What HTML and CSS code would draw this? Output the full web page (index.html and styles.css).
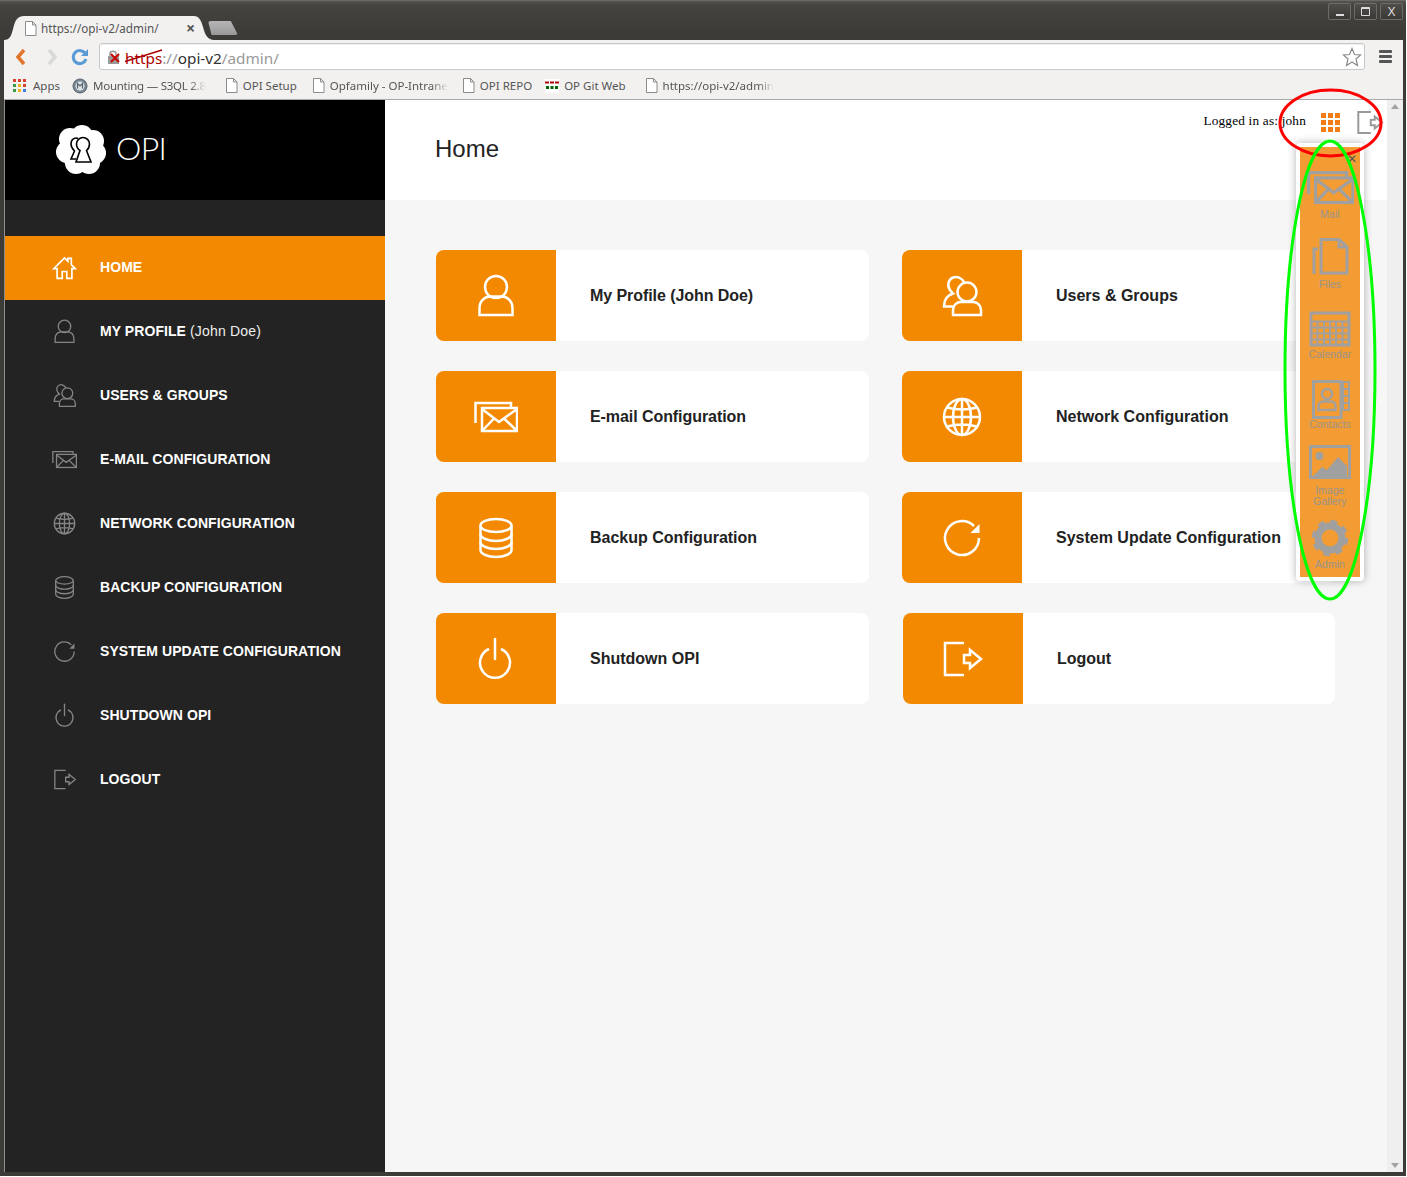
FILE: index.html
```html
<!DOCTYPE html>
<html>
<head>
    <title>OPI - Home</title>
    <link rel="stylesheet" href="styles.css">
</head>
<body>
    <!-- shared icons -->
    <svg class="defs" width="0" height="0">
        <symbol id="i-home" viewBox="0 0 44 44">
            <path d="M9 24V41H18V29H26V41H35V24H41L34 17V6H28V11L22 5L3 24Z"/>
        </symbol>
        <symbol id="i-user" viewBox="0 0 44 44">
            <circle cx="22" cy="13" r="11"/>
            <path d="M5.500 41V34C5.500 27 11 22.500 16 22.500H28C33 22.500 38.500 27 38.500 34V41Z"/>
        </symbol>
        <symbol id="i-users" viewBox="0 0 44 44">
            <circle cx="27" cy="18" r="9.500"/>
            <path d="M13 41V36C13 31 17 28 21 28H33C37 28 41 31 41 36V41Z"/>
            <path d="M24.500 9C22 3.500 16.500 2 13 3.500C8 5.500 7 12 10 16C11 17.500 12 18.500 13 19.500C8 21 4 25 4 32.500H13"/>
        </symbol>
        <symbol id="i-mail" viewBox="0 0 44 44">
            <path d="M1.500 28V8H37V12"/>
            <rect x="8" y="13" width="35" height="23"/>
            <path d="M8 14L25 27L43 14M8 36L20 23.500M43 36L30 23.500"/>
        </symbol>
        <symbol id="i-globe" viewBox="0 0 44 44">
            <circle cx="22" cy="22" r="18"/>
            <ellipse cx="22" cy="22" rx="9" ry="18"/>
            <path d="M22 4V40M4 22H40M7 12.500C16 15 28 15 37 12.500M7 31.500C16 29 28 29 37 31.500"/>
        </symbol>
        <symbol id="i-database" viewBox="0 0 44 44">
            <ellipse cx="22" cy="9.500" rx="15.500" ry="6.500"/>
            <path d="M6.500 9.500V34C6.500 38 14 41 22 41C30 41 37.500 38 37.500 34V9.500"/>
            <path d="M6.500 18C6.500 22 14 25 22 25C30 25 37.500 22 37.500 18M6.500 26C6.500 30 14 33 22 33C30 33 37.500 30 37.500 26"/>
        </symbol>
        <symbol id="i-refresh" viewBox="0 0 44 44">
            <path d="M39 22A17 17 0 1 1 34 10"/>
            <path d="M39.500 8V17H30.500Z" fill="currentColor" stroke="none"/>
        </symbol>
        <symbol id="i-power" viewBox="0 0 44 44">
            <path d="M16 12A15 15 0 1 0 28 12"/>
            <path d="M22 2V22" stroke-linecap="round"/>
        </symbol>
        <symbol id="i-logout" viewBox="0 0 44 44">
            <path d="M24 6H5V38H24"/>
            <path d="M24 18H30V13L41 22L30 31V26H24Z"/>
        </symbol>
        <symbol id="i-files" viewBox="0 0 44 44">
            <path d="M13 3.500H31L39 11V37H13Z"/>
            <path d="M31 3.500V11H39"/>
            <path d="M6 38V13H10"/>
        </symbol>
        <symbol id="i-calendar" viewBox="0 0 44 44">
            <rect x="3" y="7" width="38" height="32"/>
            <path d="M3 15.500H41M3 21.500H41M3 27.500H41M3 33.500H41M9.500 15V39M16 15V39M22 15V39M28 15V39M34.500 15V39" stroke-width="2"/>
        </symbol>
        <symbol id="i-contacts" viewBox="0 0 44 44">
            <rect x="5.500" y="5.500" width="27.500" height="36"/>
            <rect x="35" y="6" width="6" height="28" stroke-width="2"/>
            <path d="M35 13H41M35 20H41M35 27H41" stroke-width="2"/>
            <circle cx="19" cy="18" r="5" stroke-width="2.500"/>
            <path d="M10.500 34V30.500C10.500 27 13 25.500 15 25.500H23C25 25.500 27.500 27 27.500 30.500V34Z" stroke-width="2.500"/>
        </symbol>
        <symbol id="i-image" viewBox="0 0 44 44">
            <rect x="2.500" y="4.500" width="39" height="31"/>
            <circle cx="11.500" cy="14" r="4" fill="currentColor" stroke="none"/>
            <path d="M5 34L14 25L19 28L30 15L39 24V34Z" fill="currentColor" stroke="none"/>
        </symbol>
        <symbol id="i-gear" viewBox="0 0 44 44">
            <circle cx="22" cy="22" r="12" stroke-width="7"/>
            <circle cx="22" cy="22" r="16" stroke-width="4.500" stroke-dasharray="6.500 6.070"/>
        </symbol>
    </svg>

    <div class="window">
        <div class="titlebar">
            <div class="tab">
                <svg class="tab-shape" width="210" height="24" viewBox="0 0 210 24">
                    <path d="M0 24C6 24 7 20 9 13C11 5 13 0 20 0H190C195 0 197 4 199 11C201 19 204 24 210 24Z"/>
                </svg>
                <svg class="page-icon" width="13" height="15" viewBox="0 0 13 15">
                    <path d="M1.500 .5H8.500L12 4V14.500H1.500ZM8.500 .5V4H12"/>
                </svg>
                <span class="tab-title">https://opi-v2/admin/</span>
                <span class="tab-close">×</span>
            </div>
            <div class="new-tab"></div>
            <div class="win-buttons">
                <span class="win-btn"><i class="win-min"></i></span>
                <span class="win-btn"><i class="win-max"></i></span>
                <span class="win-btn win-x">X</span>
            </div>
        </div>

        <div class="toolbar">
            <svg class="nav-btn" width="16" height="20" viewBox="0 0 16 20"><path d="M11 3L5 10L11 17" class="nav-back"/></svg>
            <svg class="nav-btn nav-fwd-box" width="16" height="20" viewBox="0 0 16 20"><path d="M5 3L11 10L5 17" class="nav-fwd"/></svg>
            <svg class="nav-btn nav-reload-box" width="18" height="18" viewBox="0 0 18 18">
                <path d="M14.500 6A6.500 6.500 0 1 0 15 11" class="nav-reload"/>
                <path d="M17 1V8H10Z" fill="#5a9bd6"/>
            </svg>
            <div class="omnibox">
                <span class="lock">
                    <svg width="16" height="16" viewBox="0 0 16 16">
                        <path d="M4 7V4.500C4 1.500 10 1.500 10 4.500V7" fill="none" stroke="#999" stroke-width="1.500"/>
                        <rect x="2" y="7" width="11" height="8" fill="#999"/>
                        <path d="M5 5L13 13M13 5L5 13" stroke="#c00" stroke-width="2"/>
                    </svg>
                </span>
                <span class="url">
                    <span class="url-bad">https<svg class="url-strike" width="38" height="14" viewBox="0 0 38 14"><path d="M0 12.500L37 1"/></svg></span><span class="url-dim">://</span><span class="url-host">opi-v2</span><span class="url-dim">/admin/</span>
                </span>
                <svg class="star" width="20" height="20" viewBox="0 0 20 20">
                    <path d="M10 1.500L12.500 7.500L18.500 8L14 12L15.500 18.500L10 15L4.500 18.500L6 12L1.500 8L7.500 7.500Z"/>
                </svg>
            </div>
            <div class="menu-btn"><i></i><i></i><i></i></div>
        </div>

        <div class="bookmarks">
            <a class="bm bm-apps">
                <span class="apps-grid">
                    <i class="c-r"></i><i class="c-r"></i><i class="c-r"></i>
                    <i class="c-g"></i><i class="c-y"></i><i class="c-r"></i>
                    <i class="c-g"></i><i class="c-y"></i><i class="c-b"></i>
                </span>
                Apps
            </a>
            <a class="bm bm-mount">
                <svg width="16" height="16" viewBox="0 0 16 16">
                    <circle cx="8" cy="8" r="7" fill="#7b8794" stroke="#56616d"/>
                    <circle cx="8" cy="8" r="4.500" fill="#dfe4e8"/>
                    <path d="M5.500 10.500V5.500L8 8L10.500 5.500V10.500" fill="none" stroke="#56616d" stroke-width="1.200"/>
                </svg>
                <span class="bm-fade bm-tight">Mounting — S3QL 2.8</span>
            </a>
            <a class="bm">
                <svg class="page-icon" width="13" height="15" viewBox="0 0 13 15"><path d="M1.500 .5H8.500L12 4V14.500H1.500ZM8.500 .5V4H12"/></svg>
                OPI Setup
            </a>
            <a class="bm bm-opfamily">
                <svg class="page-icon" width="13" height="15" viewBox="0 0 13 15"><path d="M1.500 .5H8.500L12 4V14.500H1.500ZM8.500 .5V4H12"/></svg>
                <span class="bm-fade">Opfamily - OP-Intrane</span>
            </a>
            <a class="bm">
                <svg class="page-icon" width="13" height="15" viewBox="0 0 13 15"><path d="M1.500 .5H8.500L12 4V14.500H1.500ZM8.500 .5V4H12"/></svg>
                OPI REPO
            </a>
            <a class="bm bm-git">
                <svg width="14" height="14" viewBox="0 0 14 14">
                    <rect width="14" height="14" fill="#fff"/>
                    <path d="M0 3.500H14" stroke="#a00" stroke-width="2" stroke-dasharray="4 1"/>
                    <path d="M1 8.500H13" stroke="#060" stroke-width="3" stroke-dasharray="3 1.500"/>
                </svg>
                OP Git Web
            </a>
            <a class="bm bm-last">
                <svg class="page-icon" width="13" height="15" viewBox="0 0 13 15"><path d="M1.500 .5H8.500L12 4V14.500H1.500ZM8.500 .5V4H12"/></svg>
                <span class="bm-fade">https://opi-v2/admin</span>
            </a>
        </div>

        <div class="page">
            <aside class="sidebar">
                <div class="brand">
                    <svg class="brand-logo" width="50" height="50" viewBox="0 0 50 50">
                        <g fill="#fff">
                            <circle cx="25" cy="25" r="21"/>
                            <circle cx="14" cy="14" r="11"/>
                            <circle cx="26" cy="11" r="11"/>
                            <circle cx="37" cy="16" r="11"/>
                            <circle cx="39" cy="28" r="11"/>
                            <circle cx="33" cy="38" r="11"/>
                            <circle cx="20" cy="38" r="11"/>
                            <circle cx="11" cy="27" r="11"/>
                        </g>
                        <g fill="none" stroke="#000" stroke-width="1.600">
                            <path d="M24 25.500C21 23.500 20.500 21.500 20.500 19C20.500 15.500 23.500 12.500 27 12.500C30.500 12.500 33.500 15.500 33.500 19C33.500 21.500 33 23.500 30.500 25.500L35 37H20Z"/>
                            <path d="M22 13.500C20 12.500 15 13 15 19C15 22 16.500 24 18.500 26L15 34H20"/>
                        </g>
                    </svg>
                    <span class="brand-name">OPI</span>
                </div>
                <nav class="menu">
                    <a class="menu-item active"><svg class="ico ico-home"><use href="#i-home"/></svg><span><b>HOME</b></span></a>
                    <a class="menu-item"><svg class="ico"><use href="#i-user"/></svg><span><b>MY PROFILE</b> <span class="menu-name">(John Doe)</span></span></a>
                    <a class="menu-item"><svg class="ico"><use href="#i-users"/></svg><span><b>USERS &amp; GROUPS</b></span></a>
                    <a class="menu-item"><svg class="ico"><use href="#i-mail"/></svg><span><b>E-MAIL CONFIGURATION</b></span></a>
                    <a class="menu-item"><svg class="ico"><use href="#i-globe"/></svg><span><b>NETWORK CONFIGURATION</b></span></a>
                    <a class="menu-item"><svg class="ico"><use href="#i-database"/></svg><span><b>BACKUP CONFIGURATION</b></span></a>
                    <a class="menu-item"><svg class="ico"><use href="#i-refresh"/></svg><span><b>SYSTEM UPDATE CONFIGURATION</b></span></a>
                    <a class="menu-item"><svg class="ico"><use href="#i-power"/></svg><span><b>SHUTDOWN OPI</b></span></a>
                    <a class="menu-item"><svg class="ico"><use href="#i-logout"/></svg><span><b>LOGOUT</b></span></a>
                </nav>
            </aside>

            <main class="content">
                <header class="content-head">
                    <h1>Home</h1>
                    <div class="user-bar">
                        <span class="logged-in">Logged in as: john</span>
                        <span class="apps-btn"><i></i><i></i><i></i><i></i><i></i><i></i><i></i><i></i><i></i></span>
                        <svg class="ico-top"><use href="#i-logout"/></svg>
                    </div>
                </header>
                <section class="cards">
                    <a class="card"><span class="card-icon"><svg class="ico-card"><use href="#i-user"/></svg></span><span class="card-label card-label-tight">My Profile (John Doe)</span></a>
                    <a class="card"><span class="card-icon"><svg class="ico-card"><use href="#i-users"/></svg></span><span class="card-label">Users &amp; Groups</span></a>
                    <a class="card"><span class="card-icon"><svg class="ico-card"><use href="#i-mail"/></svg></span><span class="card-label card-label-tight">E-mail Configuration</span></a>
                    <a class="card"><span class="card-icon"><svg class="ico-card"><use href="#i-globe"/></svg></span><span class="card-label">Network Configuration</span></a>
                    <a class="card"><span class="card-icon"><svg class="ico-card"><use href="#i-database"/></svg></span><span class="card-label">Backup Configuration</span></a>
                    <a class="card"><span class="card-icon"><svg class="ico-card"><use href="#i-refresh"/></svg></span><span class="card-label">System Update Configuration</span></a>
                    <a class="card"><span class="card-icon"><svg class="ico-card ico-power"><use href="#i-power"/></svg></span><span class="card-label">Shutdown OPI</span></a>
                    <a class="card card-last"><span class="card-icon"><svg class="ico-card"><use href="#i-logout"/></svg></span><span class="card-label">Logout</span></a>
                </section>
            </main>

            <div class="scrollbar">
                <i class="arrow-up"></i>
                <i class="arrow-down"></i>
            </div>
        </div>
    </div>

    <!-- apps popup -->
    <div class="popup">
        <span class="popup-close">✕</span>
        <a class="tile"><span class="tile-icon"><svg class="ico-tile ico-tile-mail"><use href="#i-mail"/></svg></span><span class="tile-label">Mail</span></a>
        <a class="tile"><span class="tile-icon"><svg class="ico-tile"><use href="#i-files"/></svg></span><span class="tile-label">Files</span></a>
        <a class="tile"><span class="tile-icon"><svg class="ico-tile"><use href="#i-calendar"/></svg></span><span class="tile-label">Calendar</span></a>
        <a class="tile"><span class="tile-icon"><svg class="ico-tile"><use href="#i-contacts"/></svg></span><span class="tile-label">Contacts</span></a>
        <a class="tile tile-tall"><span class="tile-icon"><svg class="ico-tile"><use href="#i-image"/></svg></span><span class="tile-label">Image Gallery</span></a>
        <a class="tile tile-end"><span class="tile-icon"><svg class="ico-tile"><use href="#i-gear"/></svg></span><span class="tile-label">Admin</span></a>
    </div>

    <!-- red and green marks drawn on the screenshot -->
    <svg class="marks" width="1407" height="1177" viewBox="0 0 1407 1177">
        <ellipse cx="1330.500" cy="123" rx="50.500" ry="33" stroke="#f00"/>
        <ellipse cx="1330" cy="370" rx="45" ry="229" stroke="#0f0"/>
    </svg>
</body>
</html>
```

FILE: styles.css
```css
* { box-sizing: border-box; }
html, body { margin: 0; padding: 0; }
body { position: relative; width: 1407px; height: 1177px; background: #fff; overflow: hidden; font-family: "Liberation Sans", Arial, sans-serif; }
a { color: inherit; text-decoration: none; }
i { display: block; }
.defs { position: absolute; }

.window { width: 1406px; height: 1176px; padding: 0 3px 4px 4px; background: #3c3b37; display: flex; flex-direction: column; }

/* browser chrome */
.titlebar { height: 40px; margin: 0 -3px 0 -4px; padding: 0 3px 0 4px; flex: none; display: flex; align-items: flex-end; position: relative; background: linear-gradient(#565550, #45443f 4px, #3c3b37 30px); border-top: 1px solid #6a6965; }
.tab { position: relative; width: 210px; height: 24px; display: flex; align-items: center; padding: 0 0 0 20px; color: #555; font-family: "Noto Sans", sans-serif; font-size: 11.700px; }
.tab-shape { position: absolute; left: 0; top: 0; fill: #f2f1f0; }
.tab .page-icon, .tab-title, .tab-close { position: relative; }
.page-icon { flex: none; fill: #fff; stroke: #8c8c8c; stroke-width: 1; }
.tab-title { margin-left: 4px; width: 145px; white-space: nowrap; }
.tab-close { font-size: 16px; font-weight: bold; color: #555; line-height: 1; }
.new-tab { width: 30px; height: 14px; margin: 0 0 5px -6px; background: linear-gradient(#b5b5b5, #999); clip-path: polygon(0 0, 76% 0, 100% 100%, 24% 100%, 12% 100%); border-radius: 3px; }
.win-buttons { margin-left: auto; align-self: flex-start; display: flex; gap: 3px; padding-top: 2px; }
.win-btn { width: 23px; height: 17px; border: 1px solid #6d6c68; border-radius: 2px; background: linear-gradient(#4f4e4a, #3a3935); display: flex; align-items: center; justify-content: center; color: #ddd; font-size: 12px; line-height: 1; }
.win-min { width: 8px; height: 2px; margin-top: 6px; background: #ddd; }
.win-max { width: 9px; height: 9px; border: 1px solid #ddd; border-top-width: 2px; border-radius: 1px; }

.toolbar { height: 33px; flex: none; display: flex; align-items: center; background: #f2f1f0; padding-left: 9px; }
.nav-btn { flex: none; }
.nav-back, .nav-fwd, .nav-reload { fill: none; stroke-width: 3.500; }
.nav-back { stroke: #e2752e; }
.nav-fwd { stroke: #d9d9d6; }
.nav-reload { stroke: #5a9bd6; stroke-width: 3; }
.nav-fwd-box { margin-left: 15px; }
.nav-reload-box { margin-left: 11px; }
.omnibox { width: 1266px; height: 27px; margin: 0 0 0 10px; flex: none; display: flex; align-items: center; padding: 0 2px 0 6px; background: #fff; border: 1px solid #c8c8c8; border-radius: 3px; box-shadow: inset 0 1px 1px #eee; }
.lock { width: 19px; height: 16px; flex: none; }
.url { margin-top: 2px; font-family: "Noto Sans", sans-serif; font-size: 15.300px; white-space: nowrap; }
.url-bad { position: relative; color: #a00; }
.url-strike { position: absolute; left: 0; top: 1px; fill: none; stroke: #a00; stroke-width: 1.500; }
.url-dim { color: #999; }
.url-host { color: #333; }
.star { margin-left: auto; fill: #fff; stroke: #8a8a8a; stroke-width: 1.200; }
.menu-btn { margin-left: 14px; width: 13px; display: flex; flex-direction: column; gap: 2px; }
.menu-btn i { height: 3px; background: #555; border-radius: 1px; }

.bookmarks { height: 27px; flex: none; display: flex; align-items: center; padding: 0 0 1px 9px; gap: 15px; background: #f2f1f0; border-bottom: 1px solid #a8a8a8; color: #555; font-family: "Noto Sans", sans-serif; font-size: 11.500px; white-space: nowrap; }
.bm { display: flex; align-items: center; gap: 5px; }
.apps-grid { display: grid; grid-template-columns: repeat(3, 3px); gap: 2px; }
.apps-grid i { height: 3px; }
.c-r { background: #d9402f; }
.c-g { background: #3a9c4b; }
.c-y { background: #f2b21a; }
.c-b { background: #3f7fdc; }
.bm-apps { gap: 7px; }
.bm-mount { margin-left: -3px; margin-right: 4px; }
.bm-opfamily { margin-right: -1px; }
.bm-git { margin-left: -2px; }
.bm-last { margin-left: 4px; }
.bm-fade { -webkit-mask-image: linear-gradient(to right, #000 86%, transparent); mask-image: linear-gradient(to right, #000 86%, transparent); }
.bm-tight { letter-spacing: -.25px; }

/* page */
.page { flex: 1; min-height: 0; display: flex; border-left: 1px solid #8d8d8b; }
.sidebar { width: 380px; flex: none; background: #232323; }
.brand { height: 100px; background: #000; display: flex; align-items: center; padding: 0 0 1px 51px; gap: 10px; }
.brand-name { color: #fff; font-family: Lato, sans-serif; font-weight: 300; font-size: 32px; letter-spacing: -.6px; margin-bottom: 4px; }
.menu { padding-top: 36px; }
.menu-item { height: 64px; display: flex; align-items: center; gap: 23px; padding: 0 0 2px 47px; color: #eee; font-size: 14px; }
.menu-item b { color: #fff; letter-spacing: .07px; }
.menu-name { letter-spacing: .2px; }
.menu-item.active { background: #f38900; color: #fff; }
.ico { width: 25px; height: 25px; flex: none; fill: none; color: #858585; stroke: currentColor; stroke-width: 2.300; }
.ico-home { color: #fff; stroke-width: 3; }

.content { flex: 1; min-width: 0; background: #f6f6f6; }
.content-head { height: 100px; background: #fff; display: flex; align-items: center; justify-content: space-between; padding: 0 0 2px 50px; }
.content-head h1 { margin: 0; font-size: 24px; font-weight: normal; color: #222; }
.user-bar { align-self: flex-start; display: flex; align-items: center; height: 44px; color: #000; font-family: "Liberation Serif", serif; font-size: 13.300px; margin-right: 3px; }
.logged-in { margin-right: 15px; margin-top: -2px; letter-spacing: .18px; }
.apps-btn { display: grid; grid-template-columns: repeat(3, 5px); grid-auto-rows: 5px; gap: 2px; margin-right: 15px; }
.apps-btn i { background: #f47c16; }
.ico-top { width: 29px; height: 29px; fill: none; color: #999; stroke: currentColor; stroke-width: 3; }

.cards { display: grid; grid-template-columns: 433px 433px; column-gap: 33px; row-gap: 30px; padding: 50px 0 0 51px; }
.card { height: 91px; display: flex; background: #fff; border-radius: 8px; overflow: hidden; }
.card-last { margin-left: 1px; }
.card-last .ico-card { margin-right: 2px; }
.card-icon { width: 120px; flex: none; background: #f38900; display: flex; align-items: center; justify-content: center; }
.card-label { align-self: center; padding-left: 34px; font-size: 16px; font-weight: bold; color: #222; white-space: nowrap; }
.card-label-tight { letter-spacing: -.07px; }
.ico-card { width: 44px; height: 44px; fill: none; color: #fff; stroke: currentColor; stroke-width: 2.500; }
.ico-power { margin-right: 2px; }

.scrollbar { width: 16px; flex: none; background: #efefef; position: relative; }
.arrow-up, .arrow-down { position: absolute; left: 4px; border-left: 4px solid transparent; border-right: 4px solid transparent; }
.arrow-up { top: 4px; border-bottom: 5px solid #a3a3a3; }
.arrow-down { bottom: 4px; border-top: 5px solid #a3a3a3; }

/* apps popup */
.popup { position: absolute; left: 1296px; top: 143px; width: 68px; height: 438px; padding-top: 13px; background: #f39c34; border: 4px solid #fff; border-radius: 4px; box-shadow: 0 0 9px rgba(0,0,0,.3); }
.popup::before { content: ""; position: absolute; left: 23px; top: -12px; border-left: 7px solid transparent; border-right: 7px solid transparent; border-bottom: 8px solid #fff; }
.popup-close { position: absolute; right: 3px; top: 6px; font-size: 12px; line-height: 1; font-weight: bold; color: #555; font-family: "DejaVu Sans", sans-serif; }
.tile { height: 70px; padding-top: 6px; display: block; text-align: center; color: #98948c; font-size: 10.500px; line-height: 11px; }
.tile-icon { height: 43px; display: flex; align-items: center; justify-content: center; }
.tile-label { display: block; }
.tile-tall .tile-icon { height: 39px; }
.tile-tall .ico-tile { margin-top: -3px; }
.tile-tall .tile-label { padding: 0 10px; }
.tile-end { height: 67px; }
.ico-tile { width: 44px; height: 44px; flex: none; fill: none; color: #a0a0a0; stroke: currentColor; stroke-width: 3; }
.ico-tile-mail { width: 47px; height: 47px; }

.marks { position: absolute; left: 0; top: 0; fill: none; stroke-width: 3; pointer-events: none; }
```
